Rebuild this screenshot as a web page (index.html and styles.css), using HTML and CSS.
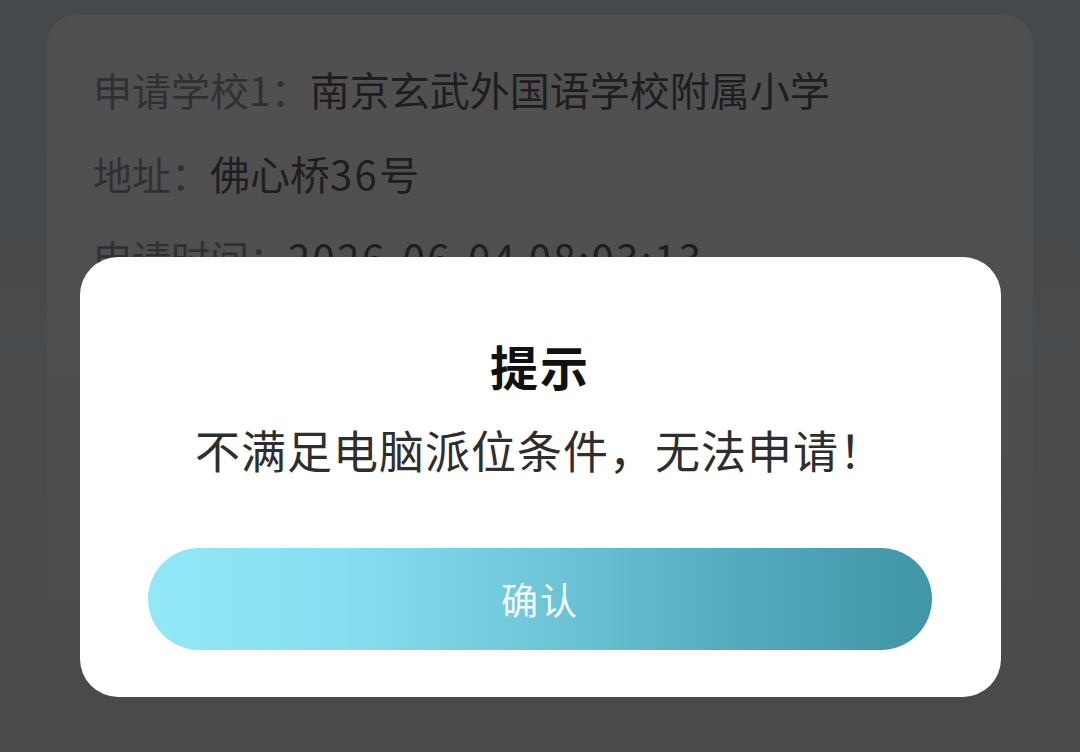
FILE: index.html
```html
<!DOCTYPE html>
<html lang="zh-CN">
<head>
<meta charset="utf-8">
<title>提示</title>
<link rel="stylesheet" href="styles.css">
</head>
<body>
<div class="page">
  <div class="card">
    <div class="row"><span class="label">申请学校1：</span><span class="value">南京玄武外国语学校附属小学</span></div>
    <div class="row"><span class="label">地址：</span><span class="value">佛心桥<span class="num">36</span>号</span></div>
    <div class="row"><span class="label">申请时间：</span><span class="value num">2026-06-04 08:03:13</span></div>
  </div>
  <div class="dialog">
    <div class="title">提示</div>
    <div class="message">不满足电脑派位条件，无法申请！</div>
    <div class="btn">确认</div>
  </div>
</div>
</body>
</html>
```
FILE: styles.css
```css
html, body {
  margin: 0;
  padding: 0;
  width: 1080px;
  height: 752px;
  overflow: hidden;
  background: #4a4a4c;
  font-family: "Noto Sans CJK SC", "Noto Sans", sans-serif;
}
.page {
  position: relative;
  width: 1080px;
  height: 752px;
  padding-top: 15px;
  box-sizing: border-box;
  overflow: hidden;
  background: linear-gradient(180deg, #45494b 0%, #484a4c 50%, #4a4a4c 100%);
}
.card {
  margin: 0 47px;
  height: 737px;
  background: linear-gradient(180deg, #505050 0%, #4f4f50 45%, #4b4b4d 80%, #4a4a4c 100%);
  border-radius: 30px 30px 0 0;
  padding: 32px 0 0 46px;
  box-sizing: border-box;
}
.row {
  font-size: 39px;
  line-height: 84px;
  height: 84px;
  white-space: nowrap;
}
.label {
  color: #303030;
}
.value {
  color: #1e1e1e;
  font-size: 40px;
}
.num {
  letter-spacing: 2.4px;
}
.dialog {
  position: absolute;
  left: 80px;
  top: 257px;
  width: 921px;
  height: 440px;
  background: #ffffff;
  border-radius: 38px;
  box-sizing: border-box;
  padding: 78px 69px 0 68px;
  display: flex;
  flex-direction: column;
  align-items: center;
}
.title {
  font-size: 48px;
  font-weight: 700;
  line-height: 60px;
  letter-spacing: 2px;
  color: #111111;
}
.message {
  margin-top: 25px;
  font-size: 45px;
  line-height: 60px;
  letter-spacing: 1px;
  color: #2e2e2e;
}
.btn {
  margin-top: 68px;
  align-self: stretch;
  height: 102px;
  border-radius: 51px;
  background: linear-gradient(90deg, #93e8f6 0%, #86def0 25%, #6ec6d8 50%, #54abbd 75%, #4095a6 100%);
  color: #f4fcfd;
  font-size: 37px;
  line-height: 102px;
  text-align: center;
  letter-spacing: 2px;
}
```
